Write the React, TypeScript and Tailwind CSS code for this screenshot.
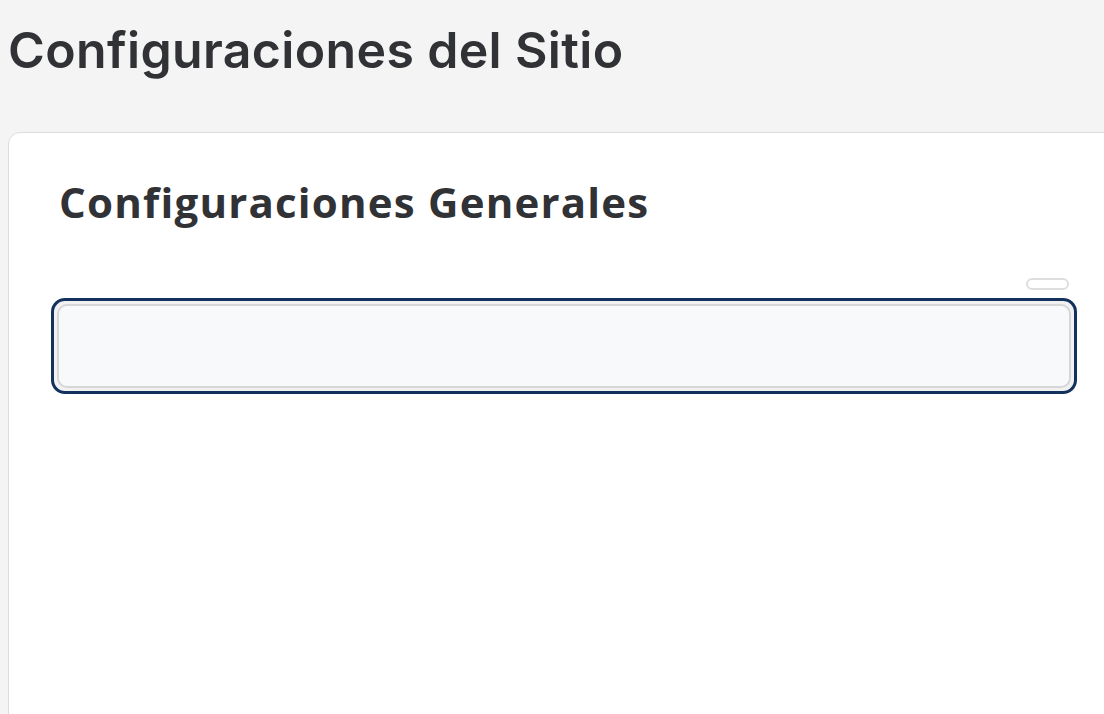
export default function App() {
  return (
    <div className="min-h-[714px] w-[1104px] overflow-hidden bg-[#f4f4f4]">
      <div className="pl-2 pt-[18px]">
        <h1 className="text-[50px] leading-[64px] font-semibold text-[#313235] font-['Inter',sans-serif] tracking-[0.35px]">
          Configuraciones del Sitio
        </h1>
      </div>
      <div className="mt-[50px] ml-2 w-[1112px] h-[600px] rounded-tl-[12px] border border-[#dcdcdc] bg-white px-[42px] pt-[40px]">
        <h2 className="pl-2 text-[42px] leading-[58px] font-bold tracking-[1.2px] text-[#313235] font-['Open_Sans',sans-serif]">
          Configuraciones Generales
        </h2>
        <div className="mt-[47px] flex justify-end pr-2">
          <div className="h-3 w-[43px] rounded-full border-2 border-[#dedede] bg-white" />
        </div>
        <div className="mt-[8px] h-[96px] rounded-[14px] border-[3px] border-[#13315c] bg-[#f1f1f1] p-[3px]">
          <div className="h-full rounded-[10px] border-2 border-[#d6d6d6] bg-[#f8f9fa]" />
        </div>
      </div>
    </div>
  );
}
